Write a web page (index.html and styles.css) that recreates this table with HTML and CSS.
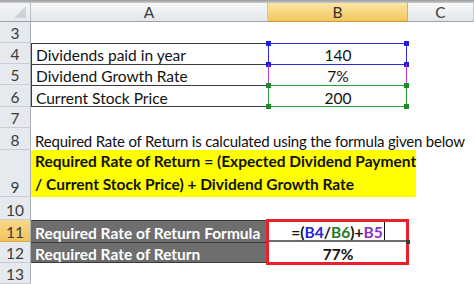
FILE: index.html
```html
<!DOCTYPE html>
<html>
<head>
<meta charset="utf-8">
<link rel="stylesheet" href="styles.css">
</head>
<body>
<div class="sheet">
  <div class="topbar"></div>
  <div class="grid">
    <div class="corner"><span class="tri"></span></div>
    <div class="colhead">A</div>
    <div class="colhead active">B</div>
    <div class="colhead">C</div>

    <div class="rowhead">3</div><div class="cell"></div><div class="cell"></div><div class="cell"></div>

    <div class="rowhead">4</div><div class="cell tbl">Dividends paid in year</div><div class="cell num">140</div><div class="cell"></div>
    <div class="rowhead">5</div><div class="cell tbl">Dividend Growth Rate</div><div class="cell num">7%</div><div class="cell"></div>
    <div class="rowhead">6</div><div class="cell tbl last">Current Stock Price</div><div class="cell num">200</div><div class="cell"></div>

    <div class="rowhead">7</div><div class="cell"></div><div class="cell"></div><div class="cell"></div>
    <div class="rowhead">8</div><div class="cell wide3 tight">Required Rate of Return is calculated using the formula given below</div>

    <div class="rowhead">9</div>
    <div class="cell wide2 hl"><div class="yellow">Required Rate of Return = (Expected Dividend Payment<br>/ Current Stock Price) + Dividend Growth Rate</div></div>
    <div class="cell"></div>

    <div class="rowhead">10</div><div class="cell"></div><div class="cell"></div><div class="cell"></div>

    <div class="rowhead active">11</div><div class="cell dark">Required Rate of Return Formula</div>
    <div class="cell num bold editing">=(<span class="r-b4">B4</span>/<span class="r-b6">B6</span>)+<span class="r-b5">B5</span><span class="caret"></span></div>
    <div class="cell"></div>

    <div class="rowhead">12</div><div class="cell dark last">Required Rate of Return</div><div class="cell num bold">77%</div><div class="cell"></div>
    <div class="rowhead">13</div><div class="cell"></div><div class="cell"></div><div class="cell"></div>
  </div>

  <div class="ref ref-b4"><i class="h tl"></i><i class="h tr"></i><i class="h bl"></i><i class="h br"></i></div>
  <div class="ref ref-b5"><i class="h bl"></i><i class="h br"></i></div>
  <div class="ref ref-b6"><i class="h tl"></i><i class="h tr"></i><i class="h bl"></i><i class="h br"></i></div>
  <div class="redbox"></div>
  <div class="handle"></div>
</div>
</body>
</html>
```

FILE: styles.css
```css
* { box-sizing: border-box; }
html, body { margin: 0; padding: 0; background: #fff; }
body { font-family: "Lato", "Liberation Sans", sans-serif; font-size: 15.5px; color: #111; }

.sheet { position: relative; width: 474px; height: 284px; overflow: hidden; background: #fff; }
.topbar { height: 3px; background: linear-gradient(#9c9c9c, #c9cbce); }

.grid {
  display: grid;
  grid-template-columns: 31px 237px 140px 66px;
  grid-template-rows: 19px 21px 21px 21px 22px 21px 22px 47px 23px 22px 21px 21px;
}

.corner {
  position: relative;
  background: linear-gradient(#f4f5f7, #e6e9ed);
  border-right: 1px solid #b9bec5;
  border-bottom: 1px solid #9ea4ac;
}
.tri {
  position: absolute; right: 4px; bottom: 3px;
  width: 0; height: 0;
  border-left: 12px solid transparent;
  border-bottom: 12px solid #cfd3d8;
}
.colhead {
  display: flex; align-items: center; justify-content: center;
  background: linear-gradient(#f7f8f9, #e3e6ea);
  border-right: 1px solid #c4c8ce;
  border-bottom: 1px solid #9ea4ac;
  color: #3b3b3b; font-size: 15.5px;
}
.colhead.active {
  background: linear-gradient(#fbe7a6, #f3c65c);
  border-right: 1px solid #d9b25a;
  border-bottom: 1px solid #c79a3c;
  color: #333;
}
.rowhead {
  display: flex; align-items: flex-end; justify-content: center;
  padding-bottom: 1px; line-height: 16px;
  background: #e6e9ed;
  border-right: 1px solid #a9afb7;
  border-bottom: 1px solid #c9cdd3;
  color: #3b3b3b; font-size: 15.5px;
}
.rowhead.active { background: linear-gradient(#f8d98a, #f2c35a); border-bottom-color: #d5a84e; }

.cell {
  display: flex; align-items: flex-end;
  padding: 0 4px 1px 4px;
  line-height: 16px;
  white-space: nowrap;
  min-width: 0;
}
.num { justify-content: center; }
.bold { font-weight: 700; }
.tight { font-size: 15px; letter-spacing: -0.2px; }
.tbl { border-top: 1px solid #3c3c3c; border-left: 1px solid #3c3c3c; }
.tbl.last { border-bottom: 1px solid #3c3c3c; padding-bottom: 0; }
.wide3 { grid-column: span 3; overflow: visible; }
.wide2 { grid-column: span 2; }

.hl { padding: 0 6px 0 0; align-items: stretch; }
.yellow {
  flex: 1;
  background: #ffff00;
  font-weight: 700;
  line-height: 23px;
  padding: 0 0 1px 4px;
  display: flex; align-items: flex-end;
  white-space: nowrap;
}

.dark {
  background: #6e6e6e;
  color: #fff;
  font-weight: 700;
  border-top: 1px solid #3a3a3a;
  overflow: hidden;
}
.dark.last { border-bottom: 1px solid #3a3a3a; padding-bottom: 0; }

.editing { border-bottom: 2px solid #6c6c6c; padding-bottom: 0; }
.r-b4 { color: #2424d8; }
.r-b6 { color: #1f7d24; }
.r-b5 { color: #8a2fc8; }
.caret { display: inline-block; width: 1px; height: 18px; background: #111; margin-left: 1px; align-self: flex-end; }

.ref { position: absolute; left: 268px; width: 139px; border: 1px solid; }
.ref-b4 { top: 43px; height: 22px; border-color: #2a2ae6; }
.ref-b5 { top: 64px; height: 22px; border-color: #b03cd0; border-top-color: transparent; }
.ref-b6 { top: 85px; height: 22px; border-color: #2e9a34; }
.h { position: absolute; width: 5px; height: 5px; }
.ref-b4 .h { background: #1f1fe0; }
.ref-b5 .h { background: #9a2fc6; }
.ref-b6 .h { background: #1f8a28; }
.h.tl { left: -3px; top: -3px; }
.h.tr { right: -3px; top: -3px; }
.h.bl { left: -3px; bottom: -3px; }
.h.br { right: -3px; bottom: -3px; }

.redbox {
  position: absolute; left: 266px; top: 219px; width: 143px; height: 46px;
  border: 3px solid #e8222b;
}
.handle { position: absolute; left: 406px; top: 240px; width: 4px; height: 4px; background: #3a3a3a; }
```
